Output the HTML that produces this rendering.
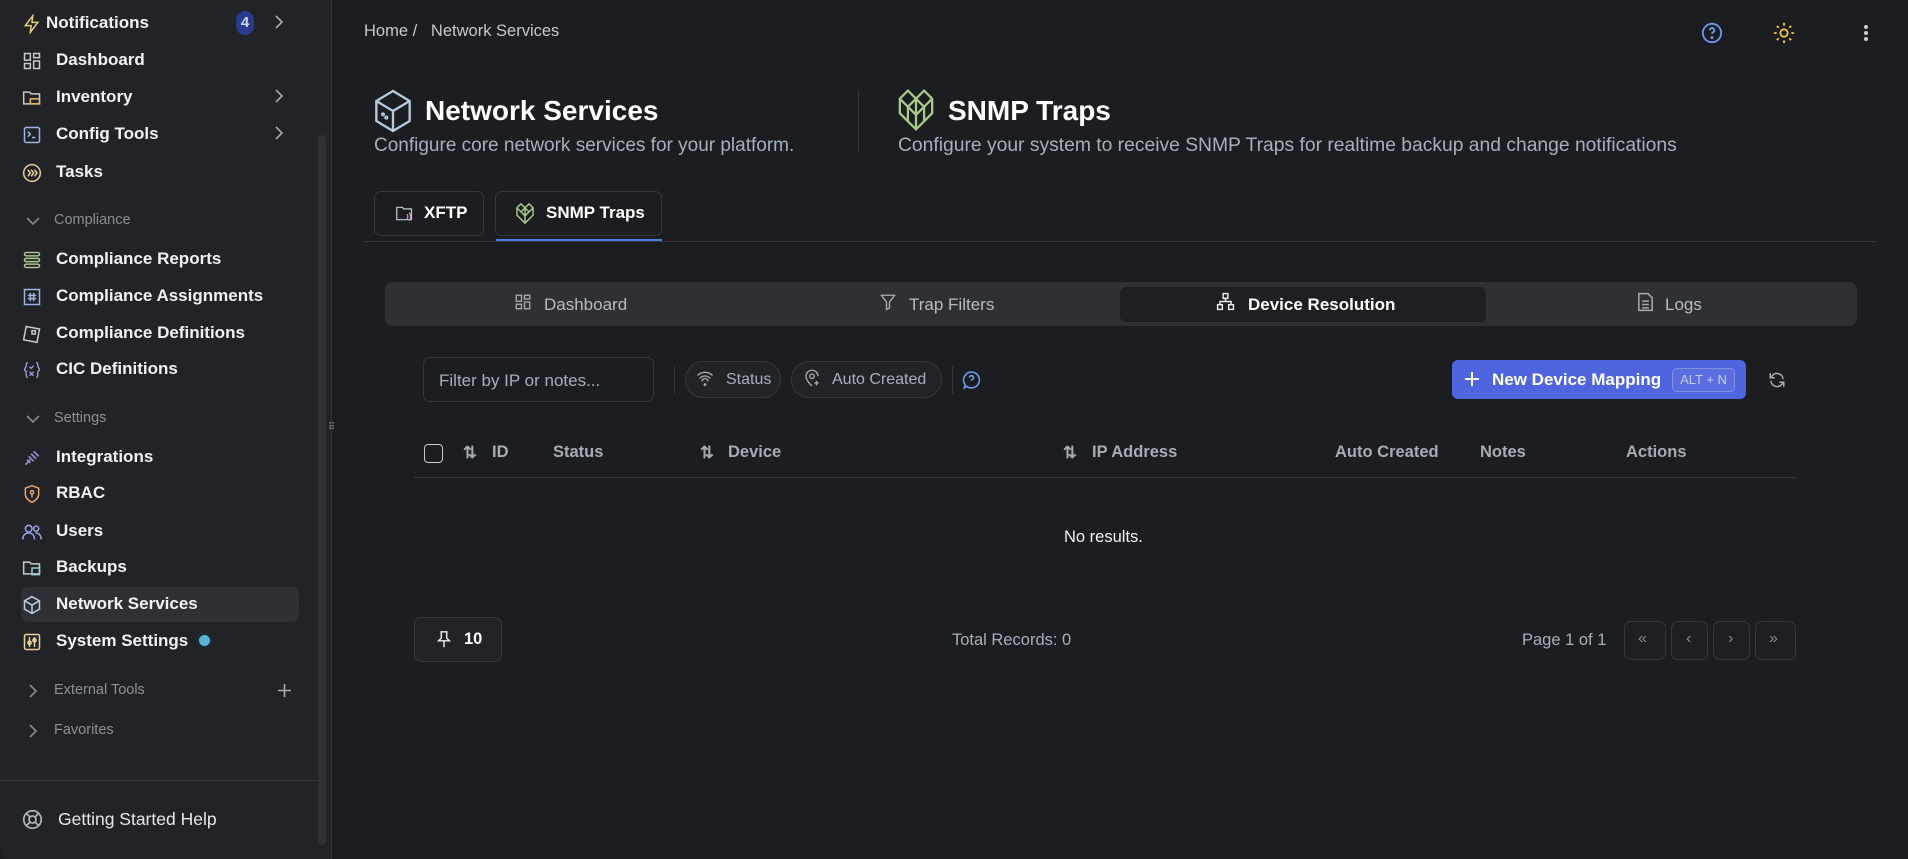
<!DOCTYPE html>
<html><head><meta charset="utf-8"><style>
*{box-sizing:border-box;margin:0;padding:0}
body{width:1908px;height:859px;background:#1c1d21;font-family:"Liberation Sans",sans-serif;color:#e8e9ec;overflow:hidden;position:relative}
.a{position:absolute;white-space:nowrap}
#side{position:absolute;left:0;top:0;width:332px;height:859px;background:#222327;border-right:1px solid #34363b;border-radius:0 0 0 10px}
.it{position:absolute;left:22px;width:276px;height:34px;font-size:17px;font-weight:bold;color:#f1f2f4;display:flex;align-items:center;white-space:nowrap}
.it svg{position:absolute;left:0;top:8px}
.it span{position:absolute;left:34px}
.sec{position:absolute;left:26px;font-size:14.5px;color:#8c8f96;white-space:nowrap;width:250px}
.sec svg{position:absolute;left:0;top:2px}
.sec span{position:absolute;left:28px}
.muted{color:#9aa3b0}
.btn{position:absolute;border:1px solid #34363b;border-radius:7px;background:#1f2024}
.th{position:absolute;top:443px;font-size:16.5px;font-weight:bold;color:#a7abb3;white-space:nowrap}
</style></head><body>
<div id="side">
  <div class="a" style="left:318px;top:135px;width:8px;height:710px;background:#2e3035;border-radius:4px"></div>
  <div class="it" style="top:6px"><svg width="20" height="20" viewBox="0 0 24 24" fill="none" stroke="#e6cf7a" stroke-width="1.8"><path d="M13 2L4 14h7l-1 8 9-12h-7z"/></svg><span style="left:24px">Notifications</span></div>
  <div class="a" style="left:236px;top:11px;width:18px;height:24px;background:#2a3a8c;border-radius:9px;font-size:15px;font-weight:bold;color:#cfd6ff;text-align:center;line-height:24px">4</div>
  <svg class="a" style="left:273px;top:15px" width="12" height="14" viewBox="0 0 12 14" fill="none" stroke="#aaa" stroke-width="1.6"><path d="M3 1l6 6-6 6"/></svg>
  <div class="it" style="top:43px"><svg width="20" height="20" viewBox="0 0 24 24" fill="none" stroke="#c6c9d0" stroke-width="1.8"><rect x="3" y="3" width="7" height="8"/><rect x="14" y="3" width="7" height="5"/><rect x="14" y="12" width="7" height="9"/><rect x="3" y="15" width="7" height="6"/></svg><span>Dashboard</span></div>
  <div class="it" style="top:80px"><svg width="20" height="20" viewBox="0 0 24 24" fill="none" stroke="#c6c9d0" stroke-width="1.8"><path d="M2 5h7l2 2h10v12H2z"/><rect x="10" y="13" width="11" height="6" stroke="#e0b86a"/></svg><span>Inventory</span></div>
  <svg class="a" style="left:273px;top:89px" width="12" height="14" viewBox="0 0 12 14" fill="none" stroke="#aaa" stroke-width="1.6"><path d="M3 1l6 6-6 6"/></svg>
  <div class="it" style="top:117px"><svg width="20" height="20" viewBox="0 0 24 24" fill="none" stroke="#9cb4dc" stroke-width="1.8"><rect x="3" y="3" width="18" height="18" rx="2"/><path d="M7 8l3 3-3 3M12 15h4"/></svg><span>Config Tools</span></div>
  <svg class="a" style="left:273px;top:126px" width="12" height="14" viewBox="0 0 12 14" fill="none" stroke="#aaa" stroke-width="1.6"><path d="M3 1l6 6-6 6"/></svg>
  <div class="it" style="top:155px"><svg width="20" height="20" viewBox="0 0 24 24" fill="none" stroke="#e6cf9a" stroke-width="1.8"><circle cx="12" cy="12" r="10"/><path d="M7 8l3 4-3 4M11 8l3 4-3 4M15 8l3 4-3 4"/></svg><span>Tasks</span></div>
  <div class="sec" style="top:212px"><svg width="14" height="14" viewBox="0 0 14 14" fill="none" stroke="#888" stroke-width="1.6"><path d="M1 4l6 6 6-6"/></svg><span>Compliance</span></div>
  <div class="it" style="top:242px"><svg width="20" height="20" viewBox="0 0 24 24" fill="none" stroke="#a8c98a" stroke-width="1.8"><rect x="3" y="3" width="18" height="4" rx="2"/><rect x="3" y="10" width="18" height="4" rx="2"/><rect x="3" y="17" width="18" height="4" rx="2"/></svg><span>Compliance Reports</span></div>
  <div class="it" style="top:279px"><svg width="20" height="20" viewBox="0 0 24 24" fill="none" stroke="#9cb4dc" stroke-width="1.8"><rect x="3" y="3" width="18" height="18"/><path d="M7 10h10M7 14h10M10 7v10M14 7v10"/></svg><span>Compliance Assignments</span></div>
  <div class="it" style="top:316px"><svg width="20" height="20" viewBox="0 0 24 24" fill="none" stroke="#c6c9d0" stroke-width="1.8"><path d="M5 3l16 3-3 16-16-3z"/><rect x="12" y="8" width="4" height="4"/></svg><span>Compliance Definitions</span></div>
  <div class="it" style="top:352px"><svg width="20" height="20" viewBox="0 0 24 24" fill="none" stroke="#9aa4dc" stroke-width="1.6"><path d="M7 3c-2 0-2 2-2 4s-2 3-2 5c0 0 2 1 2 4s0 5 2 5M17 3c2 0 2 2 2 4s2 3 2 5c0 0-2 1-2 4s0 5-2 5M9 8l2 2 3-3M9 14l5 5M14 14l-5 5"/></svg><span>CIC Definitions</span></div>
  <div class="sec" style="top:410px"><svg width="14" height="14" viewBox="0 0 14 14" fill="none" stroke="#888" stroke-width="1.6"><path d="M1 4l6 6 6-6"/></svg><span>Settings</span></div>
  <div class="it" style="top:440px"><svg width="20" height="20" viewBox="0 0 24 24" fill="none" stroke="#9c8cd8" stroke-width="2"><path d="M4 20l6-6M14 4l6 6M8 10l6 6M11 7l6 6M6 14l4 4"/></svg><span>Integrations</span></div>
  <div class="it" style="top:476px"><svg width="20" height="20" viewBox="0 0 24 24" fill="none" stroke="#e8a468" stroke-width="1.8"><path d="M12 2l8 3v7c0 5-4 8-8 10-4-2-8-5-8-10V5z"/><circle cx="12" cy="10" r="2"/><path d="M12 12v4"/></svg><span>RBAC</span></div>
  <div class="it" style="top:514px"><svg width="20" height="20" viewBox="0 0 24 24" fill="none" stroke="#9aa4ec" stroke-width="1.8"><circle cx="8" cy="8" r="4"/><circle cx="17" cy="8" r="3"/><path d="M1 21c0-5 3-8 7-8s7 3 7 8M16 13c4 0 7 3 7 8"/></svg><span>Users</span></div>
  <div class="it" style="top:550px"><svg width="20" height="20" viewBox="0 0 24 24" fill="none" stroke="#c6c9d0" stroke-width="1.8"><path d="M2 5h7l2 2h10v12H2z"/><rect x="12" y="12" width="9" height="8" stroke="#9cc8dc"/></svg><span>Backups</span></div>
  <div class="a" style="left:21px;top:587px;width:278px;height:35px;background:#2f3035;border-radius:7px"></div>
  <div class="it" style="top:587px"><svg width="20" height="20" viewBox="0 0 24 24" fill="none" stroke="#b6cbe0" stroke-width="1.8"><path d="M12 2l9 5v10l-9 5-9-5V7z"/><path d="M3 7l9 5 9-5M12 12v10"/></svg><span>Network Services</span></div>
  <div class="it" style="top:624px"><svg width="20" height="20" viewBox="0 0 24 24" fill="none" stroke="#e6cf9a" stroke-width="1.8"><rect x="3" y="3" width="18" height="18" rx="2"/><path d="M9 6v12M15 6v12"/><circle cx="9" cy="13" r="2"/><circle cx="15" cy="10" r="2"/></svg><span>System Settings</span></div>
  <div class="a" style="left:199px;top:635px;width:11px;height:11px;background:#5ab4d6;border-radius:50%;box-shadow:0 0 0 3px #1e2a33"></div>
  <div class="sec" style="top:682px"><svg width="14" height="14" viewBox="0 0 14 14" fill="none" stroke="#888" stroke-width="1.6"><path d="M4 1l6 6-6 6"/></svg><span>External Tools</span></div>
  <svg class="a" style="left:277px;top:683px" width="15" height="15" viewBox="0 0 15 15" stroke="#aaa" stroke-width="1.6"><path d="M7.5 1v13M1 7.5h13"/></svg>
  <div class="sec" style="top:722px"><svg width="14" height="14" viewBox="0 0 14 14" fill="none" stroke="#888" stroke-width="1.6"><path d="M4 1l6 6-6 6"/></svg><span>Favorites</span></div>
  <div class="a" style="left:0;top:780px;width:319px;height:1px;background:#34363b"></div>
  <svg class="a" style="left:22px;top:809px" width="21" height="21" viewBox="0 0 24 24" fill="none" stroke="#b0b3ba" stroke-width="2"><circle cx="12" cy="12" r="10"/><circle cx="12" cy="12" r="4"/><path d="M5 5l4 4M19 5l-4 4M5 19l4-4M19 19l-4-4"/></svg>
  <div class="a" style="left:58px;top:809px;font-size:17.5px;color:#e6e7ea">Getting Started Help</div>
</div>
<div class="a" style="left:328px;top:422px;font-size:10px;color:#888">⠿</div>

<div class="a" style="left:364px;top:22px;font-size:16.5px;color:#c5c8ce">Home /&nbsp;&nbsp; Network Services</div>
<svg class="a" style="left:1701px;top:22px" width="22" height="22" viewBox="0 0 24 24" fill="none" stroke="#6b9be8" stroke-width="2"><circle cx="12" cy="12" r="10"/><path d="M9.5 9a2.5 2.5 0 1 1 3.5 2.3c-.7.4-1 .9-1 1.7"/><circle cx="12" cy="17" r=".6" fill="#6b9be8"/></svg>
<svg class="a" style="left:1773px;top:22px" width="22" height="22" viewBox="0 0 24 24" fill="none" stroke="#f0c830" stroke-width="2"><circle cx="12" cy="12" r="4"/><path d="M12 1v3M12 20v3M1 12h3M20 12h3M4.2 4.2l2 2M17.8 17.8l2 2M4.2 19.8l2-2M17.8 6.2l2-2"/></svg>
<div class="a" style="left:1864px;top:25px;width:4px;height:4px;background:#ccc;border-radius:2px;box-shadow:0 6px 0 #ccc,0 12px 0 #ccc"></div>

<svg class="a" style="left:373px;top:89px" width="40" height="44" viewBox="0 0 24 26" fill="none" stroke="#b6cbe0" stroke-width="1.4"><path d="M12 1l10 6v12l-10 6-10-6V7z"/><path d="M2 7l10 6 10-6M12 13v12"/><circle cx="6" cy="15" r=".5"/><circle cx="8" cy="17" r=".5"/></svg>
<div class="a" style="left:425px;top:95px;font-size:28px;font-weight:bold;color:#fff">Network Services</div>
<div class="a" style="left:374px;top:135px;font-size:19px;color:#a5b0bd">Configure core network services for your platform.</div>
<div class="a" style="left:858px;top:90px;width:1px;height:62px;background:#34363b"></div>
<svg class="a" style="left:896px;top:89px" width="40" height="42" viewBox="0 0 24 26" fill="none" stroke="#a8c98a" stroke-width="1.4"><path d="M12 25L2 15V6l5-5 5 5 5-5 5 5v9z"/><path d="M2 6l5 5 5-5 5 5 5-5M7 11l5 5 5-5M12 6v19M7 11v9M17 11v9"/></svg>
<div class="a" style="left:948px;top:95px;font-size:28px;font-weight:bold;color:#fff">SNMP Traps</div>
<div class="a" style="left:898px;top:135px;font-size:19.3px;color:#a5b0bd">Configure your system to receive SNMP Traps for realtime backup and change notifications</div>

<div class="btn" style="left:374px;top:191px;width:110px;height:45px;background:#1c1d21"></div>
<svg class="a" style="left:395px;top:205px" width="19" height="17" viewBox="0 0 24 22" fill="none" stroke="#c6c9d0" stroke-width="1.6"><path d="M2 3h7l2 2h10v14H2z"/><path d="M15 12a4 4 0 0 1 0 6M18 10a7 7 0 0 1 0 10" stroke="#d59ad8"/></svg>
<div class="a" style="left:424px;top:203px;font-size:17px;font-weight:bold;color:#fff">XFTP</div>
<div class="btn" style="left:495px;top:191px;width:167px;height:45px;background:#1c1d21"></div>
<svg class="a" style="left:515px;top:203px" width="20" height="21" viewBox="0 0 24 26" fill="none" stroke="#a8c98a" stroke-width="1.8"><path d="M12 25L2 15V6l5-5 5 5 5-5 5 5v9z"/><path d="M2 6l5 5 5-5 5 5 5-5M7 11l5 5 5-5M12 6v19"/></svg>
<div class="a" style="left:546px;top:203px;font-size:17px;font-weight:bold;color:#fff">SNMP Traps</div>
<div class="a" style="left:364px;top:241px;width:1512px;height:1px;background:#34363b"></div>
<div class="a" style="left:496px;top:239px;width:166px;height:2px;background:#4f7be8"></div>

<div class="a" style="left:385px;top:282px;width:1472px;height:44px;background:#2f3035;border-radius:8px"></div>
<div class="a" style="left:1120px;top:287px;width:366px;height:35px;background:#1e1f23;border-radius:6px"></div>
<svg class="a" style="left:514px;top:293px" width="18" height="18" viewBox="0 0 24 24" fill="none" stroke="#aaa" stroke-width="1.8"><rect x="3" y="3" width="7" height="8"/><rect x="14" y="3" width="7" height="5"/><rect x="14" y="12" width="7" height="9"/><rect x="3" y="15" width="7" height="6"/></svg>
<div class="a" style="left:544px;top:295px;font-size:17px;color:#b8bbc2">Dashboard</div>
<svg class="a" style="left:879px;top:292px" width="18" height="20" viewBox="0 0 24 24" fill="none" stroke="#aaa" stroke-width="1.8"><path d="M3 3h18l-7 9v8l-4 2V12z"/></svg>
<div class="a" style="left:909px;top:295px;font-size:17px;color:#b8bbc2">Trap Filters</div>
<svg class="a" style="left:1216px;top:292px" width="19" height="19" viewBox="0 0 24 24" fill="none" stroke="#eee" stroke-width="1.8"><rect x="9" y="2" width="6" height="6"/><rect x="2" y="16" width="6" height="6"/><rect x="16" y="16" width="6" height="6"/><path d="M12 8v4M5 16v-4h14v4"/></svg>
<div class="a" style="left:1248px;top:295px;font-size:17px;font-weight:bold;color:#fff">Device Resolution</div>
<svg class="a" style="left:1637px;top:292px" width="17" height="20" viewBox="0 0 20 24" fill="none" stroke="#aaa" stroke-width="1.8"><path d="M2 2h11l5 5v15H2z"/><path d="M6 11h8M6 15h8M6 19h8"/></svg>
<div class="a" style="left:1665px;top:295px;font-size:17px;color:#b8bbc2">Logs</div>

<div class="btn" style="left:423px;top:357px;width:231px;height:45px;background:#1c1d21"></div>
<div class="a" style="left:439px;top:371px;font-size:17px;color:#a5b0bd">Filter by IP or notes...</div>
<div class="a" style="left:674px;top:366px;width:1px;height:28px;background:#34363b"></div>
<div class="btn" style="left:685px;top:361px;width:96px;height:37px;border-radius:18px;background:#222327"></div>
<svg class="a" style="left:696px;top:370px" width="18" height="17" viewBox="0 0 24 22" fill="none" stroke="#aaa" stroke-width="1.8"><path d="M2 7a14 14 0 0 1 20 0M5 11a9 9 0 0 1 14 0M8 15a4 4 0 0 1 8 0"/><circle cx="12" cy="19" r="1"/></svg>
<div class="a" style="left:726px;top:371px;font-size:16px;color:#a5b0bd">Status</div>
<div class="btn" style="left:791px;top:361px;width:151px;height:37px;border-radius:18px;background:#222327"></div>
<svg class="a" style="left:803px;top:369px" width="18" height="19" viewBox="0 0 24 24" fill="none" stroke="#aaa" stroke-width="1.8"><path d="M12 22s-8-7-8-13a8 8 0 0 1 16 0"/><circle cx="12" cy="9" r="3"/><path d="M18 15v6M15 18h6"/></svg>
<div class="a" style="left:832px;top:371px;font-size:16px;color:#a5b0bd">Auto Created</div>
<div class="a" style="left:952px;top:366px;width:1px;height:28px;background:#34363b"></div>
<svg class="a" style="left:962px;top:370px" width="19" height="20" viewBox="0 0 24 24" fill="none" stroke="#6b9be8" stroke-width="2"><path d="M12 2a10 10 0 1 1-6 18l-3 2 1-4A10 10 0 0 1 12 2z"/><path d="M9.5 9a2.5 2.5 0 1 1 3.5 2.3c-.7.4-1 .9-1 1.7"/></svg>

<div class="a" style="left:1452px;top:360px;width:294px;height:39px;background:#4f65e0;border-radius:6px"></div>
<svg class="a" style="left:1465px;top:372px" width="14" height="14" viewBox="0 0 14 14" stroke="#fff" stroke-width="2"><path d="M7 0v14M0 7h14"/></svg>
<div class="a" style="left:1492px;top:370px;font-size:17px;font-weight:bold;color:#fff">New Device Mapping</div>
<div class="a" style="left:1672px;top:368px;width:63px;height:24px;border:1px solid #8290d8;border-radius:5px;font-size:13px;color:#c8cff5;text-align:center;line-height:22px;background:#5a6ee2">ALT + N</div>
<svg class="a" style="left:1768px;top:371px" width="18" height="18" viewBox="0 0 24 24" fill="none" stroke="#aaa" stroke-width="2"><path d="M20 11a8 8 0 0 0-14-5L3 9M4 13a8 8 0 0 0 14 5l3-3M3 3v6h6M21 21v-6h-6"/></svg>

<div class="a" style="left:424px;top:444px;width:19px;height:19px;border:1.5px solid #c8cace;border-radius:4px"></div>
<div class="th" style="left:463px">⇅</div><div class="th" style="left:492px">ID</div>
<div class="th" style="left:553px">Status</div>
<div class="th" style="left:700px">⇅</div><div class="th" style="left:728px">Device</div>
<div class="th" style="left:1063px">⇅</div><div class="th" style="left:1092px">IP Address</div>
<div class="th" style="left:1335px">Auto Created</div>
<div class="th" style="left:1480px">Notes</div>
<div class="th" style="left:1626px">Actions</div>
<div class="a" style="left:414px;top:477px;width:1382px;height:1px;background:#34363b"></div>
<div class="a" style="left:1064px;top:528px;font-size:16.5px;color:#f1f2f4">No results.</div>

<div class="btn" style="left:414px;top:617px;width:88px;height:45px;background:#222327"></div>
<svg class="a" style="left:436px;top:630px" width="16" height="18" viewBox="0 0 16 20" fill="none" stroke="#eee" stroke-width="1.6"><path d="M4 2h8M5 2v7l-3 3h12l-3-3V2M8 12v7"/></svg>
<div class="a" style="left:464px;top:630px;font-size:16.5px;font-weight:bold;color:#fff">10</div>
<div class="a" style="left:952px;top:631px;font-size:16.5px;color:#a5b0bd">Total Records: 0</div>
<div class="a" style="left:1522px;top:631px;font-size:16.5px;color:#a5b0bd">Page 1 of 1</div>
<div class="btn" style="left:1624px;top:621px;width:42px;height:39px;background:#1e1f23"></div>
<div class="btn" style="left:1671px;top:621px;width:37px;height:39px;background:#1e1f23"></div>
<div class="btn" style="left:1713px;top:621px;width:37px;height:39px;background:#1e1f23"></div>
<div class="btn" style="left:1755px;top:621px;width:41px;height:39px;background:#1e1f23"></div>
<div class="a" style="left:1638px;top:630px;font-size:16px;color:#888">«</div>
<div class="a" style="left:1686px;top:630px;font-size:16px;color:#888">‹</div>
<div class="a" style="left:1728px;top:630px;font-size:16px;color:#888">›</div>
<div class="a" style="left:1769px;top:630px;font-size:16px;color:#888">»</div>
</body></html>
